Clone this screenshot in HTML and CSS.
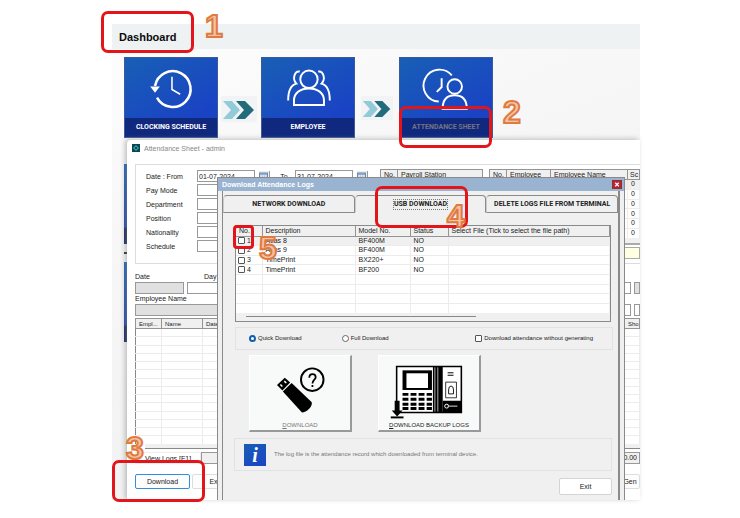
FILE: index.html
```html
<!DOCTYPE html>
<html lang="en">
<head>
<meta charset="utf-8">
<title>Dashboard</title>
<link rel="stylesheet" href="styles.css">
</head>
<body>
<main class="desktop">
  <header class="topbar"><h1>Dashboard</h1></header>
  <nav class="tiles">
    <a class="tile" href="#schedule">
      <svg viewBox="0 0 94 62" fill="none" stroke="#fff"><path d="M30.500 29A18.500 18.500 0 1 1 32.500 41" stroke-width="2.600"/><path d="M48 19.500V32.500L56.500 37.500" stroke-width="1.600"/><path d="M25.500 29.500H35.500L30.500 36Z" fill="#fff" stroke="none"/></svg>
      <span>CLOCKING SCHEDULE</span>
    </a>
    <svg class="arrows" viewBox="0 0 36 26"><path d="M2 5H11L19 14L11 23H2L10 14Z" fill="#91cbd9"/><path d="M15 5H24L33 14L24 23H15L23 14Z" fill="#216b7b"/></svg>
    <a class="tile" href="#employee">
      <svg viewBox="0 0 94 62" fill="none" stroke="#fff" stroke-width="2"><ellipse cx="48" cy="22" rx="9" ry="9"/><path d="M32.500 48.500V44C32.500 36 39 31.500 48 31.500S63.500 36 63.500 44V48.500Z"/><path d="M38.500 14C33 13 30.500 22 35 26.500C29 28 26.500 34 26.500 44M57.500 14C63 13 65.500 22 61 26.500C67 28 69.500 34 69.500 44"/></svg>
      <span>EMPLOYEE</span>
    </a>
    <svg class="arrows arrows-small" viewBox="0 0 36 26"><path d="M2 5H11L19 14L11 23H2L10 14Z" fill="#91cbd9"/><path d="M15 5H24L33 14L24 23H15L23 14Z" fill="#216b7b"/></svg>
    <a class="tile tile-dim" href="#attendance">
      <svg viewBox="0 0 94 62" fill="none" stroke="#fff" stroke-width="2"><path d="M53 18A16.500 16.500 0 1 0 39.500 45"/><path d="M42.500 21V30L37.500 35"/><circle cx="56" cy="29.500" r="7.500"/><path d="M43.500 52.500C43.500 43 48 38.500 56 38.500S68.500 43 68.500 52.500Z"/></svg>
      <span>ATTENDANCE SHEET</span>
    </a>
  </nav>
  <div class="tiles-behind"><i></i><b></b><i></i></div>

  <section class="sheet">
    <div class="sheet-title">
      <svg viewBox="0 0 8 8"><path d="M0 0H8V8H0Z" fill="#0c4656"/><path d="M4 1L7 4L4 7L1 4Z" fill="#35a8a5"/><path d="M4 2.500L5.500 4L4 5.500L2.500 4Z" fill="#0c4656"/></svg>
      <span>Attendance Sheet - admin</span>
    </div>
    <div class="filter">
      <div class="fields">
        <label for="from">Date : From</label><input id="from" value="01-07-2024">
        <label for="pay">Pay Mode</label><input id="pay">
        <label for="dep">Department</label><input id="dep">
        <label for="pos">Position</label><input id="pos">
        <label for="nat">Nationality</label><input id="nat">
        <label for="sch">Schedule</label><input id="sch">
      </div>
      <div class="to">
        <button class="cal" aria-label="Pick start date"><svg viewBox="0 0 8 8"><path d="M.5 1H7.500V7.500H.5Z" fill="#dde8f5" stroke="#6c87ad"/><path d="M.5 2H7.500" stroke="#7d9cc6" stroke-width="1"/><path d="M3 3V7M5 3V7M1 5H7" stroke="#8ea6c6" stroke-width=".5"/></svg></button>
        <label for="to">To</label><input id="to" value="31-07-2024">
        <button class="cal" aria-label="Pick end date"><svg viewBox="0 0 8 8"><path d="M.5 1H7.500V7.500H.5Z" fill="#dde8f5" stroke="#6c87ad"/><path d="M.5 2H7.500" stroke="#7d9cc6" stroke-width="1"/><path d="M3 3V7M5 3V7M1 5H7" stroke="#8ea6c6" stroke-width=".5"/></svg></button>
      </div>
      <table class="grid stations"><thead><tr><th class="c-no">No.</th><th>Payroll Station</th></tr></thead></table>
      <div class="people-pane">
        <table class="grid people">
          <thead><tr><th class="c-no">No.</th><th class="c-emp">Employee</th><th>Employee Name</th><th class="c-sc">Sc</th></tr></thead>
          <tbody>
            <tr><td></td><td></td><td></td><td>0</td></tr><tr><td></td><td></td><td></td><td>0</td></tr><tr><td></td><td></td><td></td><td>0</td></tr>
            <tr><td></td><td></td><td></td><td>0</td></tr><tr><td></td><td></td><td></td><td>0</td></tr><tr><td></td><td></td><td></td><td>0</td></tr>
          </tbody>
        </table>
        <div class="scroll"></div>
        <div class="note"></div>
      </div>
    </div>
    <div class="entry entry-date">
      <label for="date">Date</label><label class="e-day" for="day">Day</label>
      <input class="shade" id="date"><input id="day"><input class="shade" aria-label="Shift">
    </div>
    <div class="entry entry-name">
      <label class="e-name" for="name">Employee Name</label>
      <input class="shade" id="name"><input aria-label="Code"><input aria-label="Group">
    </div>
    <table class="grid logs">
      <thead><tr><th class="l-emp">Empl...</th><th class="l-name">Name</th><th>Date</th><th class="l-show">Sho</th></tr></thead>
      <tbody>
        <tr><td></td><td></td><td></td><td></td></tr><tr><td></td><td></td><td></td><td></td></tr><tr><td></td><td></td><td></td><td></td></tr><tr><td></td><td></td><td></td><td></td></tr><tr><td></td><td></td><td></td><td></td></tr><tr><td></td><td></td><td></td><td></td></tr><tr><td></td><td></td><td></td><td></td></tr>
        <tr><td></td><td></td><td></td><td></td></tr><tr><td></td><td></td><td></td><td></td></tr><tr><td></td><td></td><td></td><td></td></tr><tr><td></td><td></td><td></td><td></td></tr><tr><td></td><td></td><td></td><td></td></tr><tr><td></td><td></td><td></td><td></td></tr><tr><td></td><td></td><td></td><td></td></tr>
      </tbody>
    </table>
    <div class="logs-scroll"></div>
    <div class="totals"><button class="view">View Logs [F1]</button><output>0.00</output></div>
    <div class="actions"><button class="primary">Download</button><button class="export">Export</button><button class="generate">Gen</button></div>
  </section>

  <section class="dialog" role="dialog" aria-labelledby="dialog-title">
    <div class="dialog-title"><h2 id="dialog-title">Download Attendance Logs</h2><button class="close" aria-label="Close"><svg viewBox="0 0 9 8"><path d="M2.500 2L6.500 6M6.500 2L2.500 6" stroke="#fff" stroke-width="1.400"/></svg></button></div>
    <div class="dialog-body">
      <div class="tabs" role="tablist">
        <button role="tab">NETWORK DOWNLOAD</button>
        <button role="tab" class="active" aria-selected="true"><span>USB DOWNLOAD</span></button>
        <button role="tab">DELETE LOGS FILE FROM TERMINAL</button>
      </div>
      <div class="devices-pane">
        <table class="grid devices">
          <thead><tr><th class="d-no">No.</th><th class="d-desc">Description</th><th class="d-model">Model No.</th><th class="d-status">Status</th><th>Select File (Tick to select the file path)</th></tr></thead>
          <tbody>
            <tr class="selected"><td><label><input type="checkbox">1</label></td><td>Atlas 8</td><td>BF400M</td><td>NO</td><td></td></tr>
            <tr><td><label><input type="checkbox">2</label></td><td>Atlas 9</td><td>BF400M</td><td>NO</td><td></td></tr>
            <tr><td><label><input type="checkbox">3</label></td><td>TimePrint</td><td>BX220+</td><td>NO</td><td></td></tr>
            <tr><td><label><input type="checkbox">4</label></td><td>TimePrint</td><td>BF200</td><td>NO</td><td></td></tr>
            <tr><td></td><td></td><td></td><td></td><td></td></tr><tr><td></td><td></td><td></td><td></td><td></td></tr><tr><td></td><td></td><td></td><td></td><td></td></tr><tr><td></td><td></td><td></td><td></td><td></td></tr>
          </tbody>
        </table>
        <div class="hscroll"><i></i></div>
      </div>
      <div class="options">
        <label><input type="radio" name="mode" checked>Quick Download</label>
        <label><input type="radio" name="mode">Full Download</label>
        <label class="without"><input type="checkbox">Download attendance without generating</label>
      </div>
      <div class="big-buttons">
        <button class="dim">
          <svg viewBox="0 0 102 62"><path d="M33.500 34.500L42.500 26L63 45.500C64 50 57.500 56 53 56Z"/><path d="M27.500 28L35.500 20.500L41 25.500L33 33.500Z"/><path d="M31 27.500L33 29.500M35 24L37 26" stroke="#fff" stroke-width="1.500"/><circle cx="63.500" cy="22.500" r="11.500" fill="none" stroke="#000" stroke-width="2"/><path d="M60.500 20.500C60.500 15.500 67 16 67 20C67 22.500 63.700 22.500 63.700 26.500M63.700 28V30" fill="none" stroke="#000" stroke-width="1.800"/></svg>
          <span><u>D</u>OWNLOAD</span>
        </button>
        <button>
          <svg viewBox="0 0 102 62"><path d="M18 9H84V56H18Z" fill="#fff" stroke="#000" stroke-width="1.600"/><path d="M24 13H54V33H24Z"/><path d="M28 16H50V31H28Z" fill="#fff"/><path d="M55 9H65V56H55Z"/><path d="M57 10V55M60 10V55" stroke="#fff" stroke-width=".7"/><path d="M65 44H84V56H65Z"/><path d="M24 37.500H54M24 42.500H54M24 47.500H54M24 52H54" stroke="#000" stroke-width="3" stroke-dasharray="6 2.200"/><path d="M70 15.500H76M70 18H76" stroke="#000"/><path d="M68 25H79V41H68Z" fill="#fff" stroke="#000" stroke-width=".8"/><path d="M71 37V33Q71 29 73.500 29T76 33V37Z" fill="none" stroke="#000" stroke-width=".9"/><circle cx="69" cy="49.500" r="2" fill="none" stroke="#fff"/><path d="M70 49.500H80" stroke="#bbb" stroke-width="1.200"/><path d="M16 44H21V54H24L18.500 60L13 54H16Z"/><path d="M12 61H25" stroke="#000" stroke-width="2"/></svg>
          <span><u>D</u>OWNLOAD BACKUP LOGS</span>
        </button>
      </div>
      <div class="info"><span class="info-icon" aria-hidden="true">i</span><p>The log file is the attendance record which downloaded from terminal device.</p></div>
      <div class="dialog-foot"><button>Exit</button></div>
    </div>
  </section>

  <div class="mark m1"></div><div class="num n1">1</div>
  <div class="mark m2"></div><div class="num n2">2</div>
  <div class="mark m3"></div><div class="num n3">3</div>
  <div class="mark m4"></div><div class="num n4">4</div>
  <div class="mark m5"></div><div class="num n5">5</div>
</main>
</body>
</html>
```
FILE: styles.css
```css
* { box-sizing: border-box; }
body { margin: 0; padding: 24px 100px 18px 112px; background: #fff; font-family: "Liberation Sans", Arial, sans-serif; font-size: 7px; line-height: 9px; color: #222; }
button, input { font: inherit; color: inherit; margin: 0; padding: 0; border-radius: 0; min-width: 0; }
h1, h2, p { margin: 0; }
svg { display: block; }

.desktop { position: relative; min-height: 476px; background: linear-gradient(160deg, #fdfdfd, #f6f6f7 40%, #eeeff0); }
.topbar { height: 25px; padding: 0 7px; background: #eef2f3; display: flex; align-items: center; }
.topbar h1 { font-size: 11px; line-height: 14px; color: #0c0c0c; }

/* Shortcut tiles */
.tiles { display: flex; padding: 8px 0 0 12px; }
.tile { width: 94px; height: 81px; display: flex; flex-direction: column; background: linear-gradient(150deg, #185fb5, #1a43c4 75%); color: #fff; text-decoration: none; font: bold 7px/19px Roboto, sans-serif; text-align: center; border: 1px solid #3c5a9a; }
.tile svg { width: 100%; height: 61px; }
.tile span { background: #10297e; }
.tile-dim span { color: #737384; }
.arrows { width: 36px; height: 26px; margin: 39px 4px 0 3px; background: #f2f3f5; }
.arrows-small { width: 32px; height: 24px; margin: 39px 6px 0; }
.tiles-behind { display: flex; flex-direction: column; width: 94px; margin: 26px 0 0 12px; }
.tiles-behind i { height: 80px; background: linear-gradient(#185fb5, #1a3fae 79%, #10205c 80%); }
.tiles-behind b { height: 2px; margin: 8px 0; background: #222; }

/* Shared grid tables */
.grid { border-collapse: collapse; table-layout: fixed; width: 100%; background: #fff; }
.grid th { height: 10px; padding: 0 3px; font-weight: normal; text-align: left; white-space: nowrap; background: #f0f0f0; border: 1px solid #949494; overflow: hidden; }
.grid td { padding: 0 3px; border-top: 1px solid #ececec; border-right: 1px solid #ececec; }

/* Attendance sheet window */
.sheet { position: absolute; top: 116px; left: 15px; right: 0; bottom: 0; padding-left: 8px; overflow: hidden; background: #fff; border-top-left-radius: 4px; box-shadow: -2px -1px 5px #8888; }
.sheet-title { display: flex; align-items: center; gap: 4px; height: 24px; padding: 0 0 8px; margin-left: -3px; color: #888; }
.sheet-title svg { width: 8px; height: 8px; }
.filter { display: flex; height: 100px; padding: 4px 0 0 10px; border: 1px solid #dcdcdc; border-right: 0; }
.fields { display: grid; grid-template-columns: 51px 58px; grid-auto-rows: 14px; align-items: center; height: 84px; }
.filter input { width: 100%; height: 12px; border: 1px solid #999; background: #fff; padding: 0 1px; }
.to { display: flex; align-items: center; height: 14px; }
.to label { width: 22px; text-align: center; margin-left: 3px; }
.to .cal { margin-left: 4px; }
.to label + input { width: 58px; }
.cal { width: 11px; height: 11px; border: 0; border-right: 1px solid #999; background: #eee; }
.cal svg { width: 9px; height: 9px; }
.stations { width: 103px; height: 10px; margin-left: 12px; }
.grid .c-no { width: 17px; }
.c-emp { width: 44px; }
.grid .c-sc { width: 12px; padding: 0 2px; }
.people-pane { flex: 1; margin-left: 6px; }
.people { height: 69px; }
.people td { height: 9px; line-height: 8px; }
.people tbody tr:first-child { background: #f0f0f0; }
.scroll { height: 7px; background: #f0f0f0; border-bottom: 2px solid #aaa; }
.note { height: 12px; margin-top: 2px; background: #ffffe1; border: 1px solid #aaa; }
.entry { display: grid; grid-template-rows: 10px 12px; column-gap: 3px; }
.entry-date { grid-template-columns: 49px 1fr 6px; margin-top: 8px; }
.entry-name { grid-template-columns: 1fr 20px 6px; }
.entry input { width: 100%; height: 12px; border: 1px solid #999; background: #fff; }
.entry .shade { background: #e0e0e0; }
.e-day { grid-column: span 2; padding-left: 17px; }
.e-name { grid-column: span 3; }
.logs { height: 126px; margin-top: 2px; border-left: 1px solid #888; font-size: 6px; }
.logs th { line-height: 8px; }
.logs td { height: 8px; }
.l-emp { width: 26px; }
.l-name { width: 41px; }
.l-show { width: 15px; }
.logs-scroll { height: 5px; margin-left: 10px; background: #f0f0f0; border-bottom: 1px solid #888; }
.totals { display: flex; justify-content: space-between; margin-top: 3px; height: 12px; }
.totals .view { width: 66px; background: #fff; border: 1px solid #eee; }
.totals output { flex: 1; text-align: right; background: #f0f0f0; border: 1px solid #999; padding-right: 2px; }
.actions { display: flex; gap: 2px; margin-top: 10px; }
.actions button { height: 15px; background: #fdfdfd; border: 1px solid #ddd; border-radius: 2px; }
.actions .primary { width: 55px; border-color: #2f8fdc; }
.actions .export { width: 55px; }
.actions .generate { width: 20px; margin-left: auto; }

/* Download dialog */
.dialog { position: absolute; top: 153px; left: 105px; right: 15px; bottom: 0; display: flex; flex-direction: column; background: #f0f0f0; border: 1px solid #8a8a8a; border-bottom: 0; }
.dialog-title { flex: none; display: flex; align-items: center; justify-content: space-between; height: 13px; padding: 0 2px 0 4px; background: #9ab3d1; }
.dialog-title h2 { font-size: 7px; line-height: 9px; color: #fff; }
.close { width: 10px; height: 9px; border: 1px solid #8d3030; background: #bd2433; }
.close svg { width: 8px; height: 7px; }
.dialog-body { flex: 1; margin: 0 4px; padding: 4px 0 0; border: solid #8a8a8a; border-width: 0 2px 0 1px; }
.tabs { display: flex; }
.tabs button { flex: 1; height: 18px; font: bold 7px/9px Roboto, sans-serif; white-space: nowrap; background: #f0f0f0; border: 1px solid #8a8a8a; border-left-color: #ccc; border-radius: 4px 4px 0 0; }
.tabs .active { border-bottom-color: transparent; }
.tabs .active span { display: inline-block; border: 1px dotted #777; }
.devices-pane { margin: 12px 7px 0 12px; border: 1px solid #8a8a8a; background: #fff; }
.devices { height: 87px; }
.devices th { height: 10px; border-top: 0; line-height: 8px; }
.devices td { height: 9px; line-height: 8px; white-space: nowrap; }
.devices .selected { background: #f0f0f0; }
.devices th:first-child { border-left: 0; }
.devices td:first-child { padding: 0 2px; }
.d-no { width: 26px; }
.d-desc { width: 93px; }
.d-model { width: 55px; }
.d-status { width: 38px; }
.devices label { display: flex; align-items: center; gap: 2px; }
[type="checkbox"] { appearance: none; width: 7px; height: 7px; border: 1px solid #555; border-radius: 1px; background: #fff; }
.hscroll { height: 8px; padding: 3px 134px 0 10px; background: #f0f0f0; }
.hscroll i { display: block; height: 1px; background: #888; }
.options { display: flex; align-items: center; height: 23px; margin: 5px 5px 0 12px; padding: 0 19px 0 13px; gap: 40px; border: 1px solid #e2e2e2; font-size: 6px; }
.options label { display: flex; align-items: center; gap: 2px; }
.options .without { margin-left: auto; }
[type="radio"] { appearance: none; width: 7px; height: 7px; border: 1px solid #666; border-radius: 50%; background: #fff; }
[type="radio"]:checked { border: 2px solid #0f5fae; }
.big-buttons { display: flex; gap: 26px; margin: 5px 0 0 26px; }
.big-buttons button { width: 103px; height: 77px; background: #f8fafa; border: 1px solid #fff; border-right: 2px solid #999; border-bottom: 2px solid #999; font-size: 6px; }
.big-buttons svg { width: 100%; height: 62px; }
.big-buttons span { display: block; line-height: 8px; margin-top: 2px; }
.big-buttons .dim { color: #777; }
.info { display: flex; align-items: center; gap: 8px; height: 33px; margin: 6px 6px 0 11px; padding: 0 9px; border: 1px solid #e2e2e2; font-size: 6px; color: #777; }
.info-icon { width: 22px; height: 22px; background: linear-gradient(150deg, #185fb5, #1a43c4); color: #fff; font: italic bold 20px/22px "Liberation Serif", serif; text-align: center; }
.dialog-foot { display: flex; justify-content: flex-end; padding: 7px 6px 0; }
.dialog-foot button { width: 53px; height: 17px; background: #fff; border: 1px solid #d4d4d4; border-radius: 2px; }

/* Step callouts laid over the windows */
.mark { position: absolute; width: 93px; height: 42px; border: 3px solid #e3151a; border-radius: 7px; pointer-events: none; }
.num { position: absolute; font-weight: bold; font-size: 32px; line-height: 32px; color: #f7c3a3; -webkit-text-stroke: 2px #df7a41; }
.m1 { left: -11px; top: -13px; }
.m2 { left: 287px; top: 82px; }
.m3 { left: 0; top: 436px; }
.m4 { left: 263px; top: 162px; }
.m5 { left: 121px; top: 201px; width: 21px; height: 24px; border-radius: 4px; }
.n1 { left: 93px; top: -14px; }
.n2 { left: 391px; top: 72px; }
.n3 { left: 14px; top: 408px; }
.n4 { left: 335px; top: 176px; }
.n5 { left: 147px; top: 208px; }
```
